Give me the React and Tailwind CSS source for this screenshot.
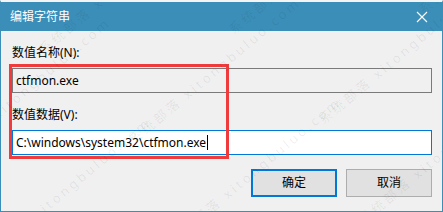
import { memo } from "react";

const font = {
  fontFamily: '"Noto Sans", "Noto Sans CJK SC", sans-serif',
};

export default function App() {
  return (
    <div
      className="relative flex h-[212px] w-[443px] flex-col overflow-hidden border-x border-b border-t-2 border-[#3b8eb8] border-t-[#f4f4f4] bg-[#f0f0f0] text-[12px] text-black"
      style={font}
    >
      <TitleBar title="编辑字符串" />

      <div className="flex flex-col pl-[11px] pr-[10px]">
        <Label text="数值名称(N):" className="mt-[14px]" />
        <div className="mt-[7px] flex h-[25px] items-center border border-[#7a7a7a] bg-[#f0f0f0] pl-[3px]">
          ctfmon.exe
        </div>

        <Label text="数值数据(V):" className="mt-[14px]" />
        <div className="mt-[7px] flex h-[25px] items-center border border-[#0078d7] bg-white pl-[3px]">
          C:\windows\system32\ctfmon.exe
          <span className="ml-[1px] inline-block h-[15px] w-[1px] bg-black" />
        </div>

        <div className="mt-[14px] flex justify-end gap-[9px]">
          <button className="flex h-[28px] w-[86px] items-center justify-center border-2 border-[#0078d7] bg-[#e1e1e1]">
            确定
          </button>
          <button className="flex h-[28px] w-[86px] items-center justify-center border border-[#adadad] bg-[#e1e1e1]">
            取消
          </button>
        </div>
      </div>

      {/* red highlight drawn over the two fields */}
      <div className="pointer-events-none absolute left-[8px] top-[62px] h-[95px] w-[220px] border-[3px] border-[#ef3b3b]" />

      <Watermark />
    </div>
  );
}

const TitleBar = memo(function TitleBar({ title }) {
  return (
    <div className="flex h-[29px] items-center justify-between bg-[#3b8eb8] pl-[9px] pr-[10px] text-white">
      <span className="text-[12px] leading-none">{title}</span>
      <svg width="12" height="12" viewBox="0 0 12 12" className="mr-[4px]">
        <path d="M1 1L11 11M11 1L1 11" stroke="white" strokeWidth="1.1" />
      </svg>
    </div>
  );
});

function Label({ text, className }) {
  return <p className={"h-[16px] leading-[16px] " + className}>{text}</p>;
}

function Watermark() {
  const spots = [
    [-60, 150],
    [130, 130],
    [320, 110],
    [40, 40],
    [230, 20],
    [420, 0],
    [-20, 250],
    [170, 230],
    [360, 210],
  ];
  return (
    <div className="pointer-events-none absolute inset-0">
      {spots.map(([x, y], i) => (
        <span
          key={i}
          className="absolute origin-left -rotate-[40deg] whitespace-nowrap text-[13px] tracking-[3px] text-black/[0.07]"
          style={{ left: x, top: y }}
        >
          系统部落 xitongbuluo.com
        </span>
      ))}
    </div>
  );
}
